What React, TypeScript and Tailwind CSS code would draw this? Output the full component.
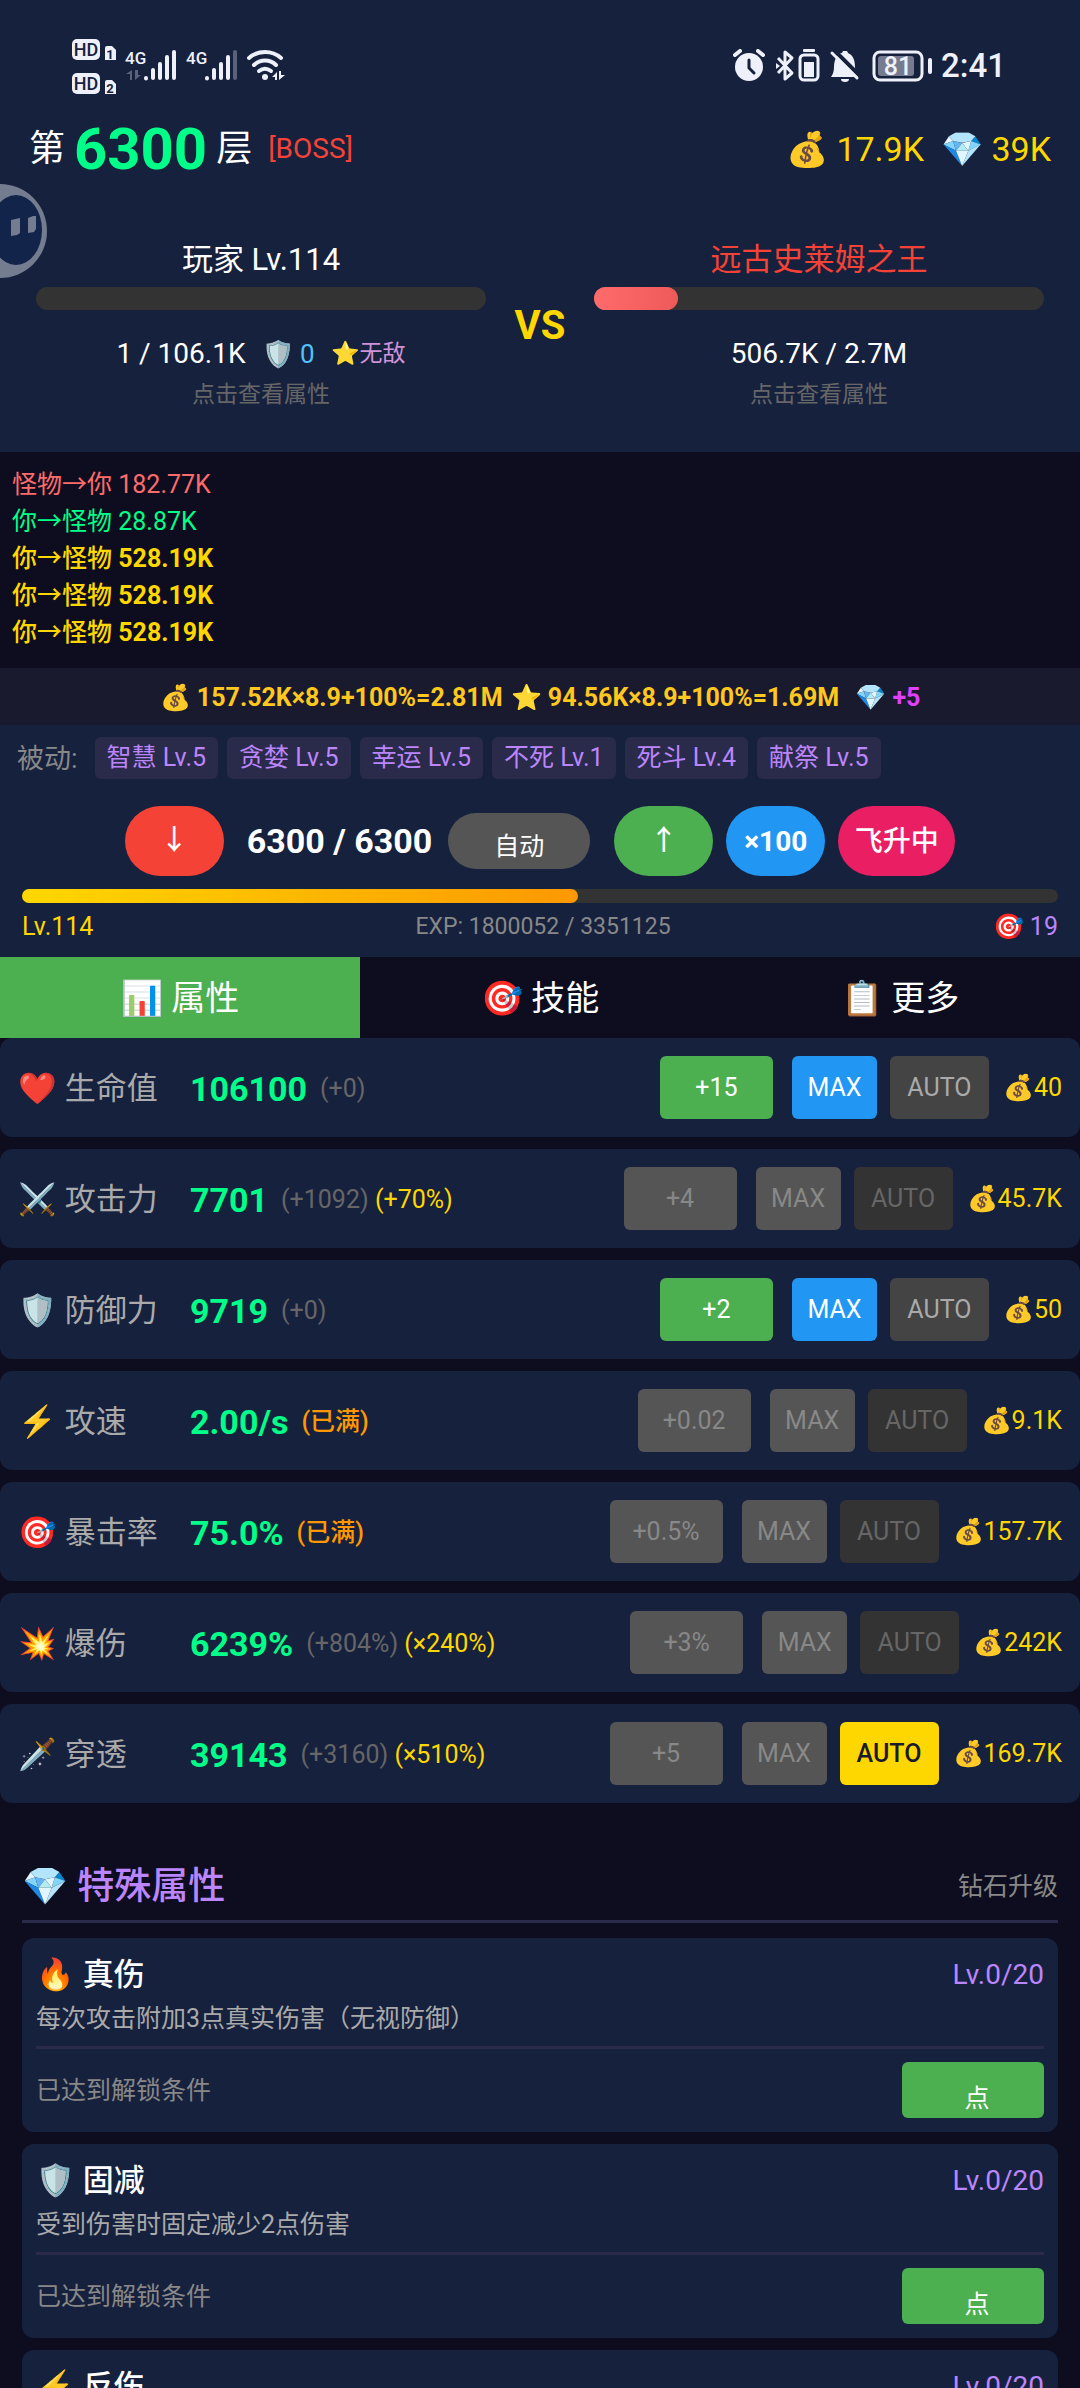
import React, { useState } from "react";

type ButtonState = "ready" | "disabled";
type AutoState = "off" | "on" | "disabled";

interface LogLine {
  from: string;
  to: string;
  damage: string;
  color: string;
  crit?: boolean;
}

interface Stat {
  icon: string;
  name: string;
  value: string;
  bonus?: string;
  multiplier?: string;
  full?: boolean;
  step: string;
  buy: ButtonState;
  auto: AutoState;
  cost: string;
}

interface SpecialStat {
  icon: string;
  name: string;
  level: string;
  desc?: string;
  status?: string;
}

const bossHp = { percent: 18.7, text: "506.7K / 2.7M" };
const exp = { current: 1800052, needed: 3351125 };

const logLines: LogLine[] = [
  { from: "怪物", to: "你", damage: "182.77K", color: "text-[#ff6b6b]" },
  { from: "你", to: "怪物", damage: "28.87K", color: "text-[#00ff88]" },
  { from: "你", to: "怪物", damage: "528.19K", color: "text-[#ffd700]", crit: true },
  { from: "你", to: "怪物", damage: "528.19K", color: "text-[#ffd700]", crit: true },
  { from: "你", to: "怪物", damage: "528.19K", color: "text-[#ffd700]", crit: true },
];

const passives = ["智慧 Lv.5", "贪婪 Lv.5", "幸运 Lv.5", "不死 Lv.1", "死斗 Lv.4", "献祭 Lv.5"];

const tabs = [
  { key: "stats", icon: "📊", label: "属性" },
  { key: "skills", icon: "🎯", label: "技能" },
  { key: "more", icon: "📋", label: "更多" },
];

const stats: Stat[] = [
  { icon: "❤️", name: "生命值", value: "106100", bonus: "(+0)", step: "+15", buy: "ready", auto: "off", cost: "40" },
  { icon: "⚔️", name: "攻击力", value: "7701", bonus: "(+1092)", multiplier: "(+70%)", step: "+4", buy: "disabled", auto: "disabled", cost: "45.7K" },
  { icon: "🛡️", name: "防御力", value: "9719", bonus: "(+0)", step: "+2", buy: "ready", auto: "off", cost: "50" },
  { icon: "⚡", name: "攻速", value: "2.00/s", full: true, step: "+0.02", buy: "disabled", auto: "disabled", cost: "9.1K" },
  { icon: "🎯", name: "暴击率", value: "75.0%", full: true, step: "+0.5%", buy: "disabled", auto: "disabled", cost: "157.7K" },
  { icon: "💥", name: "爆伤", value: "6239%", bonus: "(+804%)", multiplier: "(×240%)", step: "+3%", buy: "disabled", auto: "disabled", cost: "242K" },
  { icon: "🗡️", name: "穿透", value: "39143", bonus: "(+3160)", multiplier: "(×510%)", step: "+5", buy: "disabled", auto: "on", cost: "169.7K" },
];

const specialStats: SpecialStat[] = [
  { icon: "🔥", name: "真伤", level: "Lv.0/20", desc: "每次攻击附加3点真实伤害（无视防御）", status: "已达到解锁条件" },
  { icon: "🛡️", name: "固减", level: "Lv.0/20", desc: "受到伤害时固定减少2点伤害", status: "已达到解锁条件" },
  { icon: "⚡", name: "反伤", level: "Lv.0/20" },
];

const autoStyles: Record<AutoState, string> = {
  off: "bg-[#444] text-[#aaa]",
  on: "bg-[#ffd700] text-[#1a1a2e] font-medium",
  disabled: "bg-[#333] text-[#666]",
};

const SignalIcons: React.FC = () => (
  <svg width="214" height="56" viewBox="0 0 214 56" fill="#eef1fa" aria-hidden="true">
    {/* HD badges */}
    <rect x="0" y="0" width="28" height="21" rx="5" />
    <rect x="0" y="34" width="28" height="21" rx="5" />
    <path d="M35 7h5l4 4v10H33V9a2 2 0 0 1 2-2z" />
    <path d="M35 41h5l4 4v10H33V43a2 2 0 0 1 2-2z" />
    <g fill="#16213e" fontFamily="Roboto, sans-serif" fontWeight="500" textAnchor="middle">
      <text x="14" y="17" fontSize="18">HD</text>
      <text x="14" y="51" fontSize="18">HD</text>
      <text x="38" y="20" fontSize="13" fontWeight="700">1</text>
      <text x="38" y="54" fontSize="13" fontWeight="700">2</text>
    </g>
    <g fontFamily="Roboto, sans-serif" fontWeight="500" fontSize="17">
      <text x="53" y="25">4G</text>
      <text x="114" y="25">4G</text>
    </g>
    {/* data arrows */}
    <g fill="#5a6279">
      <path d="M60 31v10h-2v-6h-4z" />
      <path d="M63 31v10l6-5h-3v-5z" />
    </g>
    <g stroke="#eef1fa" strokeWidth="4" strokeLinecap="round">
      <path d="M74 39v0.5M81 31v8M88 25v14M95 18v21M102 13v26" />
      <path d="M135 39v0.5M142 31v8M149 25v14M156 18v21" />
      <path d="M163 13v26" stroke="#5a6279" />
    </g>
    {/* wifi */}
    <g fill="none" stroke="#eef1fa" strokeWidth="4" strokeLinecap="round">
      <path d="M177 19c9-8 23-8 32 0" />
      <path d="M182 26c6-6 16-6 22 0" />
      <path d="M187 32c4-3 8-3 12 0" />
    </g>
    <circle cx="193" cy="38" r="3" />
    <path d="M205 33v8h-2v-3h-3zM207 32v9l6-5h-4v-4z" />
  </svg>
);

const StatusIcons: React.FC = () => (
  <svg width="200" height="34" viewBox="0 0 200 34" fill="#eef1fa" aria-hidden="true">
    {/* alarm */}
    <circle cx="16" cy="18" r="14" />
    <path d="M2 6l5-4M25 2l5 4" stroke="#eef1fa" strokeWidth="4" strokeLinecap="round" />
    <path d="M16 11v8l5 5" fill="none" stroke="#16213e" strokeWidth="3" strokeLinecap="round" />
    {/* bluetooth */}
    <path
      d="M45 9l14 15-7 6V3l7 6-14 15"
      fill="none"
      stroke="#eef1fa"
      strokeWidth="3"
      strokeLinejoin="round"
    />
    <path d="M43 14l4 3-4 3z" />
    {/* device battery */}
    <rect x="70" y="0" width="12" height="3" rx="1" />
    <rect x="67" y="6" width="18" height="25" rx="4" fill="none" stroke="#eef1fa" strokeWidth="3" />
    <rect x="71" y="13" width="10" height="15" />
    {/* muted bell */}
    <path d="M98 28c2-3 3-6 3-10 0-8 4-14 8-14l1-2h4l1 2c5 2 7 7 7 14 0 4 1 7 4 10z" />
    <path d="M108 30h8a4 3 0 0 1-8 0z" />
    <path d="M101 1l26 26" stroke="#16213e" strokeWidth="4" />
    <path d="M99 4l25 25" stroke="#eef1fa" strokeWidth="3" strokeLinecap="round" />
    {/* battery */}
    <rect x="141" y="3" width="48" height="28" rx="6" fill="none" stroke="#eef1fa" strokeWidth="3" />
    <rect x="145" y="7" width="36" height="20" rx="3" fill="#777b90" />
    <text x="165" y="26" fontSize="25" fontWeight="500" fontFamily="Roboto, sans-serif" textAnchor="middle">
      81
    </text>
    <rect x="195" y="9" width="4" height="16" rx="2" />
  </svg>
);

const StatusBar: React.FC = () => (
  <div className="flex justify-between pt-[39px] pl-[72px] pr-[74px]">
    <SignalIcons />
    <div className="flex items-start gap-2 pt-[10px]">
      <StatusIcons />
      <span className="text-[33px] leading-[34px] font-medium text-[#eef1fa]">2:41</span>
    </div>
  </div>
);

const FloatingBall: React.FC = () => (
  <button type="button" aria-label="menu" className="absolute left-0 top-[183px]">
    <svg width="48" height="96" viewBox="0 0 48 96">
      <circle cx="0" cy="48" r="47" fill="#747c90" />
      <ellipse cx="16" cy="47" rx="26" ry="35" fill="#13244a" />
      <path d="M11 37l9-2v15l-3 2-6 1zM28 35l5-2h3v13l-2 3-6 1z" fill="#747c90" />
    </svg>
  </button>
);

const StatRow: React.FC<{ stat: Stat }> = ({ stat }) => {
  const ready = stat.buy === "ready";
  return (
    <li className="flex items-center justify-between rounded-xl bg-[#16213e] px-[18px] py-[18px]">
      <div className="flex items-center pt-0.5">
        <span className="w-[172px] text-[31px] leading-[42px] text-[#aaa]">
          {stat.icon} {stat.name}
        </span>
        <span className="text-[34px] leading-[42px] font-bold text-[#00ff88]">{stat.value}</span>
        <span className="ml-[13px] text-[25px] leading-[42px] text-[#666]">
          {stat.bonus}
          {stat.multiplier && <span className="text-[#ffd700]"> {stat.multiplier}</span>}
          {stat.full && <span className="font-medium text-[#ff9800]">(已满)</span>}
        </span>
      </div>
      <div className="flex items-center text-[25px] leading-[63px]">
        <button
          type="button"
          disabled={!ready}
          className={`w-[113px] rounded-md ${ready ? "bg-[#4caf50] text-white" : "bg-[#555] text-[#888]"}`}
        >
          {stat.step}
        </button>
        <button
          type="button"
          disabled={!ready}
          className={`ml-[19px] w-[85px] rounded-md ${ready ? "bg-[#2196f3] text-white" : "bg-[#555] text-[#888]"}`}
        >
          MAX
        </button>
        <button
          type="button"
          disabled={stat.auto === "disabled"}
          className={`ml-[13px] w-[99px] rounded-md ${autoStyles[stat.auto]}`}
        >
          AUTO
        </button>
        <span className="ml-[14px] text-[#ffd700]">💰{stat.cost}</span>
      </div>
    </li>
  );
};

const SpecialCard: React.FC<{ item: SpecialStat }> = ({ item }) => (
  <li className="rounded-xl bg-[#16213e] p-[14px]">
    <div className="flex items-center justify-between">
      <h3 className="text-[31px] leading-[46px] font-medium text-white">
        {item.icon} {item.name}
      </h3>
      <span className="text-[28px] leading-[46px] text-[#bb86fc]">{item.level}</span>
    </div>
    {item.desc && <p className="mt-1 text-[25px] leading-[34px] text-[#aaa]">{item.desc}</p>}
    {item.status && (
      <div className="mt-[10px] flex items-center justify-between border-t-[3px] border-[#2a2a4a] pt-[13px]">
        <span className="pt-0.5 text-[25px] text-[#888]">{item.status}</span>
        <button
          type="button"
          className="h-14 w-[142px] rounded-md bg-[#4caf50] pt-[18px] pl-2 text-[25px] leading-[38px] text-white"
        >
          点
        </button>
      </div>
    )}
  </li>
);

const App: React.FC = () => {
  const [activeTab, setActiveTab] = useState("stats");

  return (
    <div className="relative h-screen overflow-hidden bg-[#0d0d1f] font-['Roboto','Noto_Sans_CJK_SC',sans-serif] text-white">
      {/* Header */}
      <header className="bg-[#16213e] pb-10">
        <StatusBar />
        <div className="mt-5 flex h-[68px] items-center justify-between px-[29px]">
          <h1 className="flex items-center text-[36px]">
            <span>第</span>
            <span className="mx-[9px] text-[58px] font-bold text-[#00ff88]">6300</span>
            <span>层</span>
            <span className="ml-4 text-[28px] text-[#f44336]">[BOSS]</span>
          </h1>
          <div className="flex gap-[17px] text-[34px] text-[#ffd700]">
            <span>💰 17.9K</span>
            <span>💎 39K</span>
          </div>
        </div>

        {/* Battle */}
        <div className="mt-[56px] flex items-center px-9 text-center">
          <section className="flex-1">
            <h2 className="text-[31px] leading-[42px]">玩家 Lv.114</h2>
            <div className="mt-[6px] h-[23px] rounded-full bg-[#333]" />
            <p className="mt-6 flex items-center justify-center gap-4 text-[28px] leading-10">
              <span>1 / 106.1K</span>
              <span className="text-[26px] text-[#4fc3f7]">🛡️ 0</span>
              <span className="text-[23px] text-[#ce93d8]">⭐无敌</span>
            </p>
            <p className="mt-1 text-[23px] leading-[34px] text-[#666]">点击查看属性</p>
          </section>
          <strong className="w-[108px] text-[40px] font-bold text-[#ffd700]">VS</strong>
          <section className="flex-1">
            <h2 className="text-[31px] leading-[42px] text-[#f44336]">远古史莱姆之王</h2>
            <div className="mt-[6px] h-[23px] rounded-full bg-[#333]">
              <div
                className="h-full rounded-full bg-linear-to-r from-[#ff6b6b] to-[#ee5a5a]"
                style={{ width: `${bossHp.percent}%` }}
              />
            </div>
            <p className="mt-6 text-[28px] leading-10">{bossHp.text}</p>
            <p className="mt-1 text-[23px] leading-[34px] text-[#666]">点击查看属性</p>
          </section>
        </div>
      </header>

      <FloatingBall />

      {/* Battle log */}
      <ul className="px-3 pt-[14px] pb-[17px] text-[25px] leading-[37px]">
        {logLines.map((line, i) => (
          <li key={i} className={line.color}>
            <span className={line.crit ? "font-medium" : ""}>
              {line.from}→{line.to}
            </span>{" "}
            <span className={line.crit ? "font-bold" : ""}>{line.damage}</span>
          </li>
        ))}
      </ul>

      {/* Rewards */}
      <div className="flex justify-center bg-[#1a1a2e] pt-[13px] pb-[11px] text-[25px] leading-[33px] font-bold text-[#ffc81e]">
        <span>💰 157.52K×8.9+100%=2.81M</span>
        <span className="ml-2">⭐ 94.56K×8.9+100%=1.69M</span>
        <span className="ml-4 text-[#e040fb]">💎 +5</span>
      </div>

      {/* Controls */}
      <section className="bg-[#16213e] pt-3 pb-[13px]">
        <div className="flex items-center gap-[9px] px-[17px] text-[25px] leading-[42px]">
          <span className="mr-2 pt-0.5 text-[27px] leading-10 text-[#888]">被动:</span>
          {passives.map((name) => (
            <span key={name} className="rounded-md bg-[#2a2a4a] px-3 text-[#bb86fc]">
              {name}
            </span>
          ))}
        </div>

        <div className="mt-[27px] flex items-center justify-center text-[28px] font-medium">
          <button type="button" className="h-[70px] w-[99px] rounded-full bg-[#f44336]">↓</button>
          <span className="ml-[23px] text-[34px] font-bold">6300 / 6300</span>
          <button
            type="button"
            className="ml-4 h-14 w-[142px] rounded-full bg-[#555] pt-3 text-[25px] leading-[44px] font-normal"
          >
            自动
          </button>
          <button type="button" className="ml-6 h-[70px] w-[99px] rounded-full bg-[#4caf50]">↑</button>
          <button type="button" className="ml-[13px] h-[70px] w-[99px] rounded-full bg-[#2196f3] pt-0.5 font-bold">
            ×100
          </button>
          <button type="button" className="ml-[13px] h-[70px] w-[117px] rounded-full bg-[#e91e63] pt-0.5">
            飞升中
          </button>
        </div>

        <div className="px-[22px]">
          <div className="mt-[13px] h-[14px] rounded-full bg-[#333]">
            <div
              className="h-full rounded-full bg-linear-to-r from-[#ffd700] to-[#ff9800]"
              style={{ width: `${(exp.current / exp.needed) * 100}%` }}
            />
          </div>
          <div className="mt-[7px] flex items-center justify-between text-[25px] leading-[34px]">
            <span className="text-[#ffd700]">Lv.114</span>
            <span className="text-[23px] text-[#888]">
              EXP: {exp.current} / {exp.needed}
            </span>
            <span className="text-[#bb86fc]">🎯 19</span>
          </div>
        </div>
      </section>

      {/* Tabs */}
      <nav className="grid grid-cols-3">
        {tabs.map((tab) => (
          <button
            key={tab.key}
            type="button"
            onClick={() => setActiveTab(tab.key)}
            className={`pt-[21px] pb-[19px] text-[34px] leading-[41px] ${activeTab === tab.key ? "bg-[#4caf50]" : ""}`}
          >
            {tab.icon} {tab.label}
          </button>
        ))}
      </nav>

      <ul className="flex flex-col gap-3">
        {stats.map((stat) => (
          <StatRow key={stat.name} stat={stat} />
        ))}
      </ul>

      {/* Special stats */}
      <section className="mt-[60px] px-[22px]">
        <div className="flex items-center justify-between border-b-[3px] border-[#2a2a4a] pb-[9px]">
          <h2 className="text-[37px] leading-[48px] font-medium text-[#bb86fc]">💎 特殊属性</h2>
          <span className="text-[25px] text-[#888]">钻石升级</span>
        </div>
        <ul className="mt-[15px] flex flex-col gap-3">
          {specialStats.map((item) => (
            <SpecialCard key={item.name} item={item} />
          ))}
        </ul>
      </section>
    </div>
  );
};

export default App;
